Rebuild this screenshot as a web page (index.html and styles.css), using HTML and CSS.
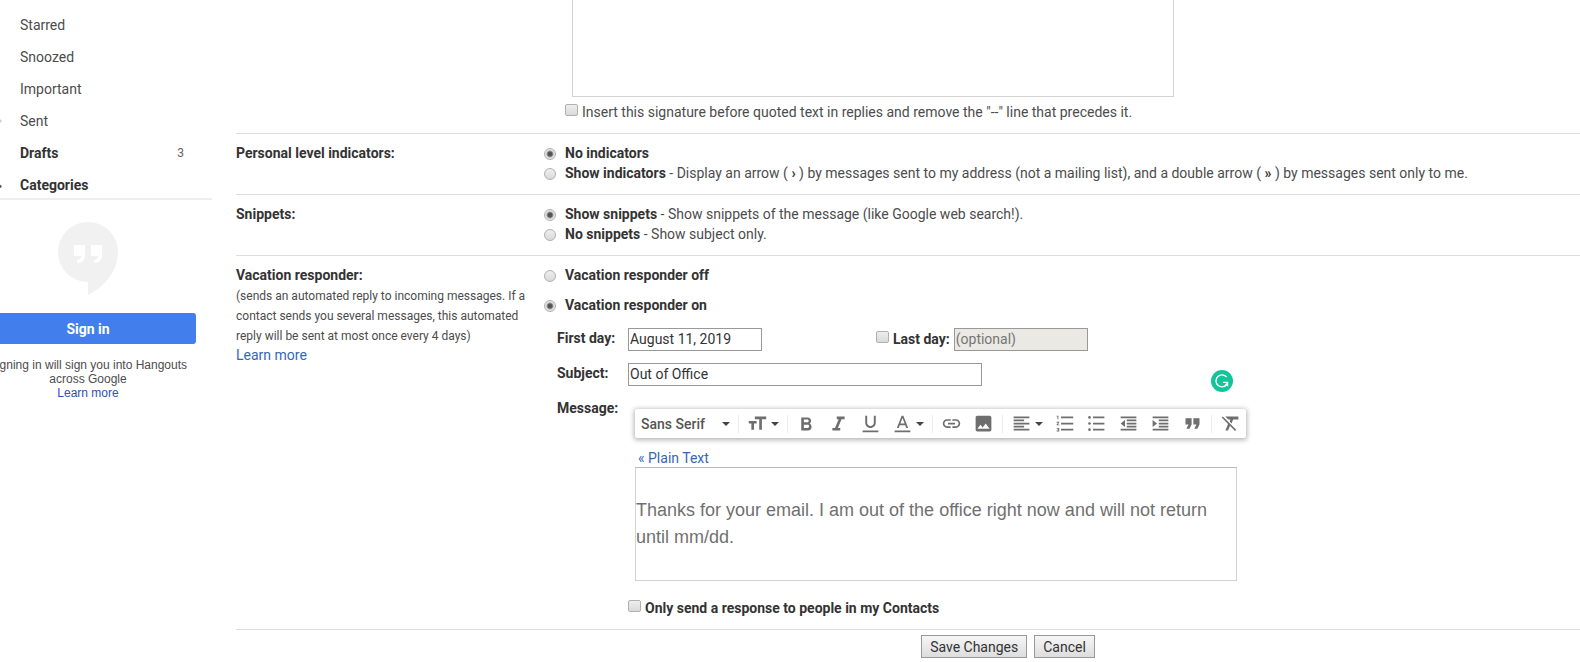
FILE: index.html
```html
<!DOCTYPE html>
<html lang="en">
<head>
<meta charset="utf-8">
<title>Settings</title>
<link rel="stylesheet" href="styles.css">
</head>
<body>
<div class="app">
  <aside class="sidebar">
    <nav class="folders">
      <a class="folder" href="#">Starred</a>
      <a class="folder" href="#">Snoozed</a>
      <a class="folder" href="#">Important</a>
      <a class="folder folder-dot-light" href="#">Sent</a>
      <a class="folder folder-bold" href="#">Drafts <span class="count">3</span></a>
      <a class="folder folder-bold folder-dot" href="#">Categories</a>
    </nav>
    <div class="hangouts">
      <svg class="hangouts-logo" viewBox="0 0 60 73" aria-hidden="true">
        <path fill="#f1f1f1" d="M30 0a30 30 0 1 0 0 60v13C46 65 60 49 60 30A30 30 0 0 0 30 0z"/>
        <path fill="#fff" d="M16 23h11v11c0 4-3 7-8 7v-3c3 0 4-2 4-4h-7zM33 23h11v11c0 4-3 7-8 7v-3c3 0 4-2 4-4h-7z"/>
      </svg>
      <button class="sign-in" type="button">Sign in</button>
      <p class="hangouts-note">Signing in will sign you into Hangouts<br>across Google<br><a href="#">Learn more</a></p>
    </div>
  </aside>

  <main class="settings">
    <section class="signature">
      <div class="signature-box"></div>
      <label class="check-row"><input class="check" type="checkbox"><span>Insert this signature before quoted text in replies and remove the "--" line that precedes it.</span></label>
    </section>

    <section class="row">
      <h2 class="row-title">Personal level indicators:</h2>
      <div class="options">
        <label class="option"><input class="radio" type="radio" name="ind" checked><span><b>No indicators</b></span></label>
        <label class="option"><input class="radio" type="radio" name="ind"><span><b>Show indicators</b> - Display an arrow ( <b>›</b> ) by messages sent to my address (not a mailing list), and a double arrow ( <b>»</b> ) by messages sent only to me.</span></label>
      </div>
    </section>

    <section class="row">
      <h2 class="row-title">Snippets:</h2>
      <div class="options">
        <label class="option"><input class="radio" type="radio" name="snip" checked><span><b>Show snippets</b> - Show snippets of the message (like Google web search!).</span></label>
        <label class="option"><input class="radio" type="radio" name="snip"><span><b>No snippets</b> - Show subject only.</span></label>
      </div>
    </section>

    <section class="row">
      <div class="row-info">
        <h2 class="row-title">Vacation responder:</h2>
        <p class="row-note">(sends an automated reply to incoming messages. If a contact sends you several messages, this automated reply will be sent at most once every 4 days)</p>
        <a class="learn" href="#">Learn more</a>
      </div>
      <div class="options">
        <div class="vacation-toggle">
          <label class="option"><input class="radio" type="radio" name="vac"><span><b>Vacation responder off</b></span></label>
          <label class="option"><input class="radio" type="radio" name="vac" checked><span><b>Vacation responder on</b></span></label>
        </div>
        <div class="form">
          <label class="form-label" for="first">First day:</label>
          <div class="dates">
            <input class="text date" id="first" type="text" value="August 11, 2019">
            <div class="last-day">
              <input class="check" id="use-last" type="checkbox">
              <label for="use-last">Last day:</label>
              <input class="text date date-off" type="text" value="(optional)" aria-label="Last day" disabled>
            </div>
          </div>
          <label class="form-label" for="subject">Subject:</label>
          <input class="text subject" id="subject" type="text" value="Out of Office">
          <label class="form-label" for="message">Message:</label>
          <div class="message">
            <svg class="assistant" viewBox="0 0 22 22" aria-hidden="true">
              <circle cx="11" cy="11" r="11" fill="#15c39a"/>
              <path d="M15.2 6.600A6 6 0 1 0 15.500 14.800" fill="none" stroke="#fff" stroke-width="1.400" stroke-linecap="round"/>
              <path d="M12 12.300h4.600v4M16.600 12.300 14.500 15.500" fill="none" stroke="#fff" stroke-width="1.300"/>
            </svg>
            <div class="toolbar">
              <div class="font-pick">
                <select class="font-select" aria-label="Font"><option>Sans Serif</option></select>
                <svg class="arrow" viewBox="0 0 8 4"><path d="M0 0h8L4 4z"/></svg>
              </div>
              <i class="sep"></i>
              <button class="tool tool-drop" type="button" aria-label="Size"><svg class="icon" viewBox="0 0 24 24"><path d="M9 4v3h5v12h3V7h5V4H9zm-7 8h3v7h3v-7h3V9H2v3z"/></svg><svg class="arrow" viewBox="0 0 8 4"><path d="M0 0h8L4 4z"/></svg></button>
              <i class="sep"></i>
              <button class="tool" type="button" aria-label="Bold"><svg class="icon" viewBox="0 0 24 24"><path transform="translate(0 1)" d="M15.6 10.79c.97-.67 1.65-1.77 1.65-2.79 0-2.26-1.75-4-4-4H6v15h8.04c2.09 0 3.71-1.7 3.71-3.79 0-1.52-.86-3.82-2.15-4.42zM9 6.500h4c.83 0 1.500.67 1.500 1.500s-.67 1.500-1.500 1.500H9v-3zm4.500 9.500H9v-3.500h4.500c.83 0 1.500.67 1.500 1.750s-.67 1.750-1.500 1.750z"/></svg></button>
              <button class="tool" type="button" aria-label="Italic"><svg class="icon" viewBox="0 0 24 24"><path d="M10 4v3h2.210l-4.200 10H5v3h9v-3h-2.700l4.200-10H19V4z"/></svg></button>
              <button class="tool" type="button" aria-label="Underline"><svg class="icon" viewBox="0 0 24 24"><path d="M12 17c3.310 0 6-2.690 6-6V3h-2.200v8c0 2.100-1.700 3.800-3.800 3.800S8.200 13.100 8.200 11V3H6v8c0 3.310 2.690 6 6 6zM3 20v2h18v-2z"/></svg></button>
              <button class="tool tool-drop" type="button" aria-label="Text colour"><svg class="icon" viewBox="0 0 24 24"><path d="M11 3 5.500 17h2.250l1.120-3h6.250l1.120 3h2.250L13 3zm-1.380 9L12 5.670 14.380 12zM3 20v2h18v-2z"/></svg><svg class="arrow" viewBox="0 0 8 4"><path d="M0 0h8L4 4z"/></svg></button>
              <i class="sep"></i>
              <button class="tool" type="button" aria-label="Link"><svg class="icon" viewBox="0 0 24 24"><path d="M3.900 12c0-1.710 1.390-3.100 3.100-3.100h4V7H7c-2.760 0-5 2.240-5 5s2.240 5 5 5h4v-1.900H7c-1.710 0-3.100-1.390-3.100-3.100zM8 13h8v-2H8v2zm9-6h-4v1.900h4c1.710 0 3.100 1.390 3.100 3.100s-1.390 3.100-3.100 3.100h-4V17h4c2.760 0 5-2.240 5-5s-2.240-5-5-5z"/></svg></button>
              <button class="tool" type="button" aria-label="Image"><svg class="icon" viewBox="0 0 24 24"><path d="M21 19V5c0-1.100-.9-2-2-2H5c-1.100 0-2 .9-2 2v14c0 1.100.9 2 2 2h14c1.100 0 2-.9 2-2zM8.500 13.500l2.500 3.010L14.500 12l4.500 6H5l3.500-4.500z"/></svg></button>
              <i class="sep"></i>
              <button class="tool tool-drop" type="button" aria-label="Align"><svg class="icon" viewBox="0 0 24 24"><path d="M3 4h18v2H3zM3 7.500h12v2H3zM3 11h18v2H3zM3 14.500h12v2H3zM3 18h18v2H3z"/></svg><svg class="arrow" viewBox="0 0 8 4"><path d="M0 0h8L4 4z"/></svg></button>
              <button class="tool" type="button" aria-label="Numbered list"><svg class="icon" viewBox="0 0 24 24"><path d="M3 18h2v.5H4v1h1v.5H3v1h3v-4H3zM4 7h1V3H3v1h1zm-1 4h1.800L3 13.100v.9h3v-1H4.200L6 10.900V10H3zM8 4v2h14V4zm0 16h14v-2H8zm0-7h14v-2H8z"/></svg></button>
              <button class="tool" type="button" aria-label="Bulleted list"><svg class="icon" viewBox="0 0 24 24"><circle cx="4" cy="5" r="1.500"/><circle cx="4" cy="12" r="1.500"/><circle cx="4" cy="19" r="1.500"/><path d="M8 4h13v2H8zM8 11h13v2H8zM8 18h13v2H8z"/></svg></button>
              <button class="tool" type="button" aria-label="Indent less"><svg class="icon" viewBox="0 0 24 24"><path d="M3 4h18v2H3zM10 7.500h11v2H10zM10 11h11v2H10zM10 14.500h11v2H10zM3 18h18v2H3zM3 12l5-4v8z"/></svg></button>
              <button class="tool" type="button" aria-label="Indent more"><svg class="icon" viewBox="0 0 24 24"><path d="M3 4h18v2H3zM10 7.500h11v2H10zM10 11h11v2H10zM10 14.500h11v2H10zM3 18h18v2H3zM8 12 3 8v8z"/></svg></button>
              <button class="tool" type="button" aria-label="Quote"><svg class="icon" viewBox="0 0 24 24"><path d="M5 18h3.500l2.500-5V6H4v7h3.500zm9 0h3.500l2.500-5V6h-7v7h3.500z"/></svg></button>
              <i class="sep"></i>
              <button class="tool" type="button" aria-label="Remove formatting"><svg class="icon" viewBox="0 0 24 24"><path d="M3.270 4 2 5.270l7.200 7.200L6.200 20h3l2.200-5.300L17.200 20.500l1.300-1.300zM6 4l3.500 3.500h2.400l-.9 2.200 2.200 2.200 1.800-4.400H21V4z"/></svg></button>
            </div>
            <a class="plain" href="#">« Plain Text</a>
            <textarea class="editor" id="message">Thanks for your email. I am out of the office right now and will not return until mm/dd.</textarea>
          </div>
          <label class="contacts"><input class="check" type="checkbox"><b>Only send a response to people in my Contacts</b></label>
        </div>
      </div>
    </section>

    <footer class="actions">
      <button class="btn" type="button">Save Changes</button>
      <button class="btn" type="button">Cancel</button>
    </footer>
  </main>
</div>
</body>
</html>
```
FILE: styles.css
```css
* { box-sizing: border-box; }
body {
  margin: 0;
  background: #fff;
  color: #4c4c4c;
  font-family: Roboto, "Liberation Sans", sans-serif;
  font-size: 14px;
  line-height: 20px;
}
b { font-weight: 700; color: #333; }
a { color: #3467b5; text-decoration: none; }
p, h2 { margin: 0; }

.app { display: flex; align-items: flex-start; }

/* Sidebar */
.sidebar { flex: 0 0 212px; margin-right: 24px; overflow: hidden; }
.folders { padding-top: 9px; border-bottom: 2px solid #eee; }
.folder {
  display: flex;
  align-items: center;
  height: 32px;
  padding: 0 28px 0 20px;
  color: #4c4c4c;
}
.folder:last-child { height: 29px; padding-top: 3px; }
.folder-bold { font-weight: 700; color: #333; }
.folder-dot-light { background: radial-gradient(circle at 0 50%, #ccc 1px, transparent 2px); }
.folder-dot { background: radial-gradient(circle at 0 60%, #555 1px, transparent 2px); }
.count { margin-left: auto; font-size: 12px; font-weight: 400; color: #666; }
.hangouts {
  display: flex;
  flex-direction: column;
  align-items: center;
  margin: 22px 16px 0 -20px;
}
.hangouts-logo { width: 60px; height: 73px; }
.sign-in {
  align-self: stretch;
  height: 31px;
  margin-top: 18px;
  border: 0;
  border-radius: 3px;
  background: #427fed;
  color: #fff;
  font: 700 14px Roboto, "Liberation Sans", sans-serif;
}
.hangouts-note {
  margin-top: 14px;
  font: 12px/14px "Liberation Sans", sans-serif;
  text-align: center;
  white-space: nowrap;
}
.hangouts-note a { color: #2a52b0; }

/* Settings rows */
.settings { flex: 1; min-width: 0; }
.signature { padding: 0 0 11px 329px; }
.signature-box {
  width: 602px;
  height: 97px;
  margin-left: 7px;
  border: 1px solid #d3d3d3;
  border-top: 0;
}
.check-row { display: flex; gap: 4px; margin-top: 5px; }
.row {
  display: grid;
  grid-template-columns: 308px minmax(0, 1fr);
  padding: 9px 0 11px;
  border-top: 1px solid #ddd;
}
.row-title { font-size: 14px; font-weight: 700; line-height: 20px; color: #333; }
.row-note { margin-top: 1px; font-size: 12px; }
.learn { display: block; margin-top: -1px; }
.option { display: flex; align-items: center; gap: 9px; white-space: nowrap; }
.vacation-toggle { display: grid; gap: 10px; }

.radio, .check {
  appearance: none;
  flex: none;
  width: 12px;
  height: 12px;
  margin: 0;
  border: 1px solid #b0b0b0;
  background: linear-gradient(#eee, #dadada);
}
.radio { border-radius: 50%; margin-top: 1px; }
.radio:checked { background: radial-gradient(circle, #555 2px, #e6e6e6 4px); }
.check { width: 13px; border-radius: 2px; margin-top: 2px; }

/* Vacation form */
.form {
  display: grid;
  grid-template-columns: 71px minmax(0, 1fr);
  row-gap: 12px;
  padding: 13px 0 0 13px;
}
.form-label { font-weight: 700; color: #333; }
.dates { display: flex; gap: 114px; }
.last-day { display: flex; gap: 4px; font-weight: 700; color: #333; }
.last-day label { padding-top: 1px; }
.last-day .check { margin: 3px 0 0; }
.text {
  height: 23px;
  padding: 0 1px 1px;
  border: 1px solid #999;
  color: #333;
  background: #fff;
  font: 14px Roboto, "Liberation Sans", sans-serif;
}
.date { width: 134px; }
.date-off { background: #ebe9e4; color: #757575; }
.subject { width: 354px; }
.message { position: relative; width: 611px; margin: 11px 0 0 7px; }
.assistant { position: absolute; right: 13px; top: -39px; width: 22px; height: 22px; }
.toolbar {
  display: flex;
  align-items: center;
  height: 29px;
  border-radius: 2px;
  background: #fff;
  box-shadow: 0 1px 5px 1px rgba(0, 0, 0, .3);
}
.font-pick { display: grid; flex: 1; align-items: center; }
.font-select {
  grid-area: 1 / 1;
  appearance: none;
  padding: 0 6px;
  border: 0;
  background: none;
  color: #555;
  font: 500 14px Roboto, "Liberation Sans", sans-serif;
}
.arrow { width: 8px; height: 4px; fill: #444; }
.font-pick .arrow { grid-area: 1 / 1; justify-self: end; margin-right: 5px; pointer-events: none; }
.sep { width: 1px; height: 18px; margin: 0 2px 0 3px; background: #ebebeb; }
.tool {
  display: flex;
  align-items: center;
  justify-content: center;
  width: 32px;
  height: 28px;
  padding: 0;
  border: 0;
  background: none;
}
.tool-drop { justify-content: flex-start; gap: 3px; width: 43px; padding-left: 6px; }
.icon { width: 21px; height: 21px; fill: #6e6e6e; }
.plain { display: block; width: max-content; margin: 10px 0 -1px 3px; }
.editor {
  display: block;
  width: 602px;
  height: 114px;
  padding: 29px 0;
  border: 1px solid #d3d3d3;
  border-top-color: #b9b9b9;
  outline: 0;
  resize: none;
  color: #707070;
  font: 18px/27px "Liberation Sans", sans-serif;
}
.contacts { grid-column: 2; display: flex; gap: 4px; margin-top: 5px; }

.actions {
  display: flex;
  justify-content: center;
  gap: 7px;
  padding: 5px 0 4px 200px;
  border-top: 1px solid #ddd;
}
.btn {
  height: 23px;
  padding: 0 8px;
  border: 1px solid #999;
  background: linear-gradient(#f6f6f6, #ddd);
  color: #333;
  font: 14px Roboto, "Liberation Sans", sans-serif;
}
```
